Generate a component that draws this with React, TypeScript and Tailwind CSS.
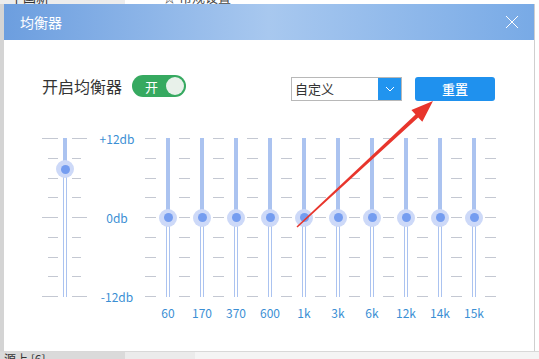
import React from "react";

const freqs = ["60", "170", "370", "600", "1k", "3k", "6k", "12k", "14k", "15k"];
const rows = [0, 1, 2, 3, 4, 5, 6, 7, 8];
const TRACK_H = 159;

function DashCol() {
  return (
    <div className="flex h-[159px] w-[12px] flex-col justify-between">
      {rows.map((r) => (
        <div key={r} className="h-px w-[11px] bg-[#c4c8d2]" />
      ))}
    </div>
  );
}

function Track({ thumb, width }: { thumb: number; width: string }) {
  return (
    <div className={`relative h-[159px] ${width}`}>
      <div
        className="absolute left-1/2 top-0 w-[4px] -translate-x-1/2 bg-[#abc3f0]"
        style={{ height: thumb }}
      />
      <div
        className="absolute bottom-0 left-1/2 w-[4px] -translate-x-1/2 border-x border-[#abc3f0]"
        style={{ top: thumb }}
      />
      <div
        className="absolute left-1/2 flex h-[18px] w-[18px] -translate-x-1/2 -translate-y-1/2 items-center justify-center rounded-full bg-[#cdd9f8]"
        style={{ top: thumb }}
      >
        <div className="h-[9px] w-[9px] rounded-full bg-[#759df0]" />
      </div>
    </div>
  );
}

export default function App() {
  return (
    <div className="flex h-[359px] w-[539px] flex-col overflow-hidden bg-white font-['Noto_Sans_CJK_SC',sans-serif]">
      {/* background window, top */}
      <div className="flex h-[4px] shrink-0 overflow-hidden">
        <div className="w-[125px] bg-[#ececec] pl-[10px]">
          <div className="-mt-[10px] text-[13px] leading-[14px] text-[#333]">中国新</div>
        </div>
        <div className="flex-1 bg-white pl-[38px]">
          <div className="-mt-[10px] text-[13px] leading-[14px] text-[#444]">☆ 常规设置</div>
        </div>
      </div>

      <div className="flex flex-1">
        <div className="w-[4px] shrink-0 bg-[#d4d4d4]" />

        {/* dialog */}
        <div className="flex w-[530px] flex-col">
          <div className="flex h-[36px] items-center justify-between bg-gradient-to-r from-[#6c9edf] via-[#a8c8ef] to-[#78aae6] pl-[16px] pr-[15px]">
            <span className="text-[14px] text-white">均衡器</span>
            <svg width="14" height="14" viewBox="0 0 14 14">
              <path d="M1 1 L13 13 M13 1 L1 13" stroke="#fff" strokeWidth="1" />
            </svg>
          </div>

          <div className="flex h-[311px] flex-col bg-white pl-[38px]">
            {/* controls row */}
            <div className="flex items-start pt-[35px]">
              <span className="text-[16px] leading-[22px] text-[#333]">开启均衡器</span>
              <div className="ml-[10px] flex h-[22px] w-[54px] items-center justify-between rounded-full bg-[#36a960] pl-[13px] pr-[2px]">
                <span className="text-[13px] leading-none text-white">开</span>
                <div className="h-[18px] w-[18px] rounded-full bg-[#e8f1ea]" />
              </div>

              <div className="ml-[105px] mt-[2px] flex h-[24px] w-[111px] border border-[#b8b8b8]">
                <span className="flex-1 pl-[3px] text-[13px] leading-[22px] text-[#333]">自定义</span>
                <div className="flex w-[23px] items-center justify-center bg-[#2194ef]">
                  <svg width="10" height="6" viewBox="0 0 10 6">
                    <path d="M1 1 L5 5 L9 1" fill="none" stroke="#fff" strokeWidth="1" />
                  </svg>
                </div>
              </div>

              <button className="ml-[13px] mt-[2px] h-[24px] w-[80px] rounded-[3px] bg-[#1f91ee] text-[13px] font-medium text-white">
                重置
              </button>
            </div>

            {/* equalizer */}
            <div className="mt-[37px] flex items-start">
              <div className="flex h-[159px] w-[16px] flex-col items-end justify-between">
                {rows.map((r) => (
                  <div key={r} className={`h-px bg-[#c4c8d2] ${r % 4 === 0 ? "w-[16px]" : "w-[10px]"}`} />
                ))}
              </div>
              <Track thumb={31} width="w-[14px]" />
              <div className="flex h-[159px] w-[15px] flex-col items-start justify-between">
                {rows.map((r) => (
                  <div key={r} className={`h-px bg-[#c4c8d2] ${r % 4 === 0 ? "w-[15px]" : "w-[9px]"}`} />
                ))}
              </div>

              <div className="ml-[12px] flex h-[159px] w-[36px] flex-col items-center justify-between text-[12px] text-[#3b8fd4]">
                <div className="flex h-px items-center whitespace-nowrap">+12db</div>
                <div className="flex h-px items-center whitespace-nowrap">0db</div>
                <div className="flex h-px items-center whitespace-nowrap">-12db</div>
              </div>

              <div className="ml-[10px] flex items-start">
                <DashCol />
                {freqs.map((f) => (
                  <React.Fragment key={f}>
                    <div className="flex w-[22px] flex-col items-center">
                      <Track thumb={TRACK_H / 2} width="w-[22px]" />
                      <span className="mt-[8px] whitespace-nowrap text-[12px] leading-[16px] text-[#3b8fd4]">
                        {f}
                      </span>
                    </div>
                    <DashCol />
                  </React.Fragment>
                ))}
              </div>
            </div>
          </div>
        </div>

        <div className="flex-1 border-l border-[#cfcfcf] bg-white" />
      </div>

      {/* background window, bottom */}
      <div className="flex h-[8px] shrink-0 overflow-hidden border-t border-[#d8d8d8]">
        <div className="w-[125px] bg-[#dadada] pl-[4px]">
          <div className="text-[12px] leading-[14px] text-[#333]">源上 [6]</div>
        </div>
        <div className="w-[70px] bg-[#ebebeb]" />
        <div className="flex-1 bg-[#f4f4f4]" />
      </div>

      {/* annotation arrow */}
      <svg className="pointer-events-none absolute left-0 top-0" width="539" height="359">
        <polygon
          points="296.5,226.4 415.5,114.5 411.4,110.1 433,101 422.3,121.8 418.2,117.4 297.5,227.6"
          fill="#e8352c"
        />
      </svg>
    </div>
  );
}
